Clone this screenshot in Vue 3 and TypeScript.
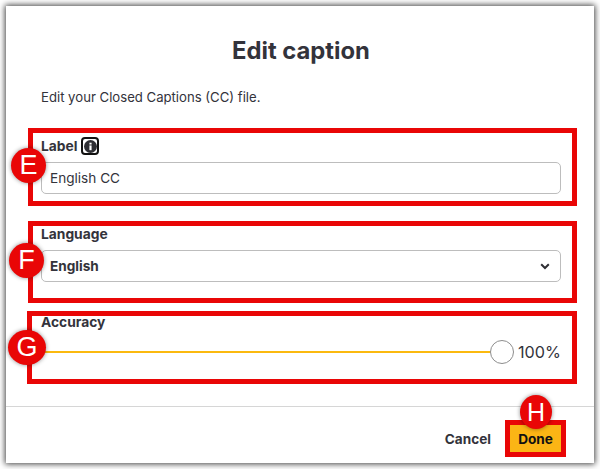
<script setup lang="ts">
import { ref } from 'vue'
const label = ref('English CC')
const accuracy = 100
</script>

<template>
  <div class="page">
    <div class="dialog">
      <h1 class="title">Edit caption</h1>
      <p class="desc">Edit your Closed Captions (CC) file.</p>

      <section class="mark mark-e">
        <span class="badge badge-e">E</span>
        <div class="label-row">
          <span class="field-label">Label</span>
          <span class="info">
            <svg width="13" height="13" viewBox="0 0 12 12">
              <circle cx="6" cy="6" r="6" fill="#2e2e33" />
              <rect x="5" y="5" width="2" height="4.4" fill="#fff" />
              <rect x="5" y="2.5" width="2" height="1.7" fill="#fff" />
            </svg>
          </span>
        </div>
        <input v-model="label" class="control" type="text" />
      </section>

      <section class="mark mark-f">
        <span class="badge badge-f">F</span>
        <div class="field-label">Language</div>
        <div class="control select">
          <span>English</span>
          <svg width="10" height="7" viewBox="0 0 10 7">
            <path d="M1.2 1.3 5 5 8.8 1.3" fill="none" stroke="#2e2e33" stroke-width="2" />
          </svg>
        </div>
      </section>

      <section class="mark mark-g">
        <span class="badge badge-g">G</span>
        <div class="field-label accuracy-label">Accuracy</div>
        <div class="slider-row">
          <div class="track"><span class="thumb"></span></div>
          <span class="value">{{ accuracy }}%</span>
        </div>
      </section>

      <footer class="footer">
        <button class="cancel" type="button">Cancel</button>
        <div class="done-mark">
          <span class="badge badge-h">H</span>
          <button class="done" type="button">Done</button>
        </div>
      </footer>
    </div>
  </div>
</template>

<style>
html, body { margin: 0; background: #fff; }
</style>

<style scoped>
.page {
  width: 600px;
  height: 469px;
  padding: 6px;
  box-sizing: border-box;
  font-family: "Inter", "Liberation Sans", sans-serif;
  color: #33333b;
  overflow: hidden;
}
.dialog {
  width: 588px;
  height: 457px;
  box-sizing: border-box;
  background: #fff;
  box-shadow: 0 0 6px 1px rgba(0, 0, 0, 0.75);
  display: flex;
  flex-direction: column;
  padding-top: 32px;
}
.title {
  margin: 0;
  padding-left: 2px;
  text-align: center;
  font-size: 23.8px;
  line-height: 26px;
  font-weight: 700;
}
.desc {
  margin: 25px 0 0 35px;
  font-size: 13.15px;
  line-height: 16px;
}
.mark {
  position: relative;
  box-sizing: border-box;
  width: 549px;
  margin-left: 22px;
  border: 5px solid #e90606;
  padding: 0 10px 0 8px;
}
.mark-e { height: 78px; margin-top: 23px; padding-top: 3px; }
.mark-f { height: 82px; margin-top: 15px; }
.mark-g { height: 73px; margin-top: 8px; margin-left: 21px; width: 550px; padding-left: 9px; }
.badge {
  position: absolute;
  z-index: 2;
  width: 35px;
  height: 35px;
  border-radius: 50%;
  background: #e90606;
  color: #fff;
  font-size: 27px;
  line-height: 35px;
  text-align: center;
  box-shadow: 0 0 4px rgba(0, 0, 0, 0.45);
  font-family: "Liberation Sans", sans-serif;
}
.badge-e { left: -22px; top: 15px; }
.badge-f { left: -24px; top: 17px; }
.badge-g { left: -24px; top: 14px; width: 38px; height: 35px; }
.badge-h { left: 10px; top: -30px; width: 32px; height: 34px; line-height: 34px; font-size: 25px; }
.label-row { display: flex; align-items: center; gap: 4px; height: 20px; }
.field-label {
  font-size: 13.8px;
  line-height: 16px;
  font-weight: 700;
}
.accuracy-label { margin-top: -2px; }
.info {
  box-sizing: border-box;
  width: 18px;
  height: 18px;
  border: 2px solid #111;
  border-radius: 4px;
  display: flex;
  align-items: center;
  justify-content: center;
}
.control {
  display: block;
  box-sizing: border-box;
  width: 520px;
  height: 32px;
  margin-top: 6px;
  padding: 0 8px;
  border: 1px solid #bdbdbd;
  border-radius: 5px;
  background: #fff;
  font: 13.6px/30px "Inter", "Liberation Sans", sans-serif;
  color: #33333b;
  outline: none;
}
.select {
  display: flex;
  align-items: center;
  justify-content: space-between;
  font-weight: 700;
  margin-top: 8px;
  padding-right: 10px;
}
.slider-row { display: flex; align-items: center; margin-top: 9px; height: 26px; }
.track {
  position: relative;
  width: 461px;
  height: 2px;
  background: #fbb90f;
}
.thumb {
  position: absolute;
  right: -12px;
  top: -11px;
  box-sizing: border-box;
  width: 24px;
  height: 24px;
  border-radius: 50%;
  border: 1px solid #8d8d8d;
  background: #fff;
}
.value { margin-left: 16px; font-size: 16.2px; line-height: 18px; }
.footer {
  margin-top: 22px;
  border-top: 1px solid #d6d6d6;
  flex: 1;
  display: flex;
  justify-content: flex-end;
  align-items: flex-start;
  padding: 13px 28px 0 0;
}
.cancel {
  margin: 11px 14px 0 0;
  padding: 0;
  border: 0;
  background: none;
  font: 700 13.6px/16px "Inter", "Liberation Sans", sans-serif;
  color: #33333b;
}
.done-mark {
  position: relative;
  box-sizing: border-box;
  width: 61px;
  height: 37px;
  border: 5px solid #e90606;
}
.done {
  display: block;
  width: 100%;
  height: 100%;
  padding: 0;
  border: 0;
  background: #fbb515;
  font: 700 13.6px/16px "Inter", "Liberation Sans", sans-serif;
  color: #111;
}
</style>
